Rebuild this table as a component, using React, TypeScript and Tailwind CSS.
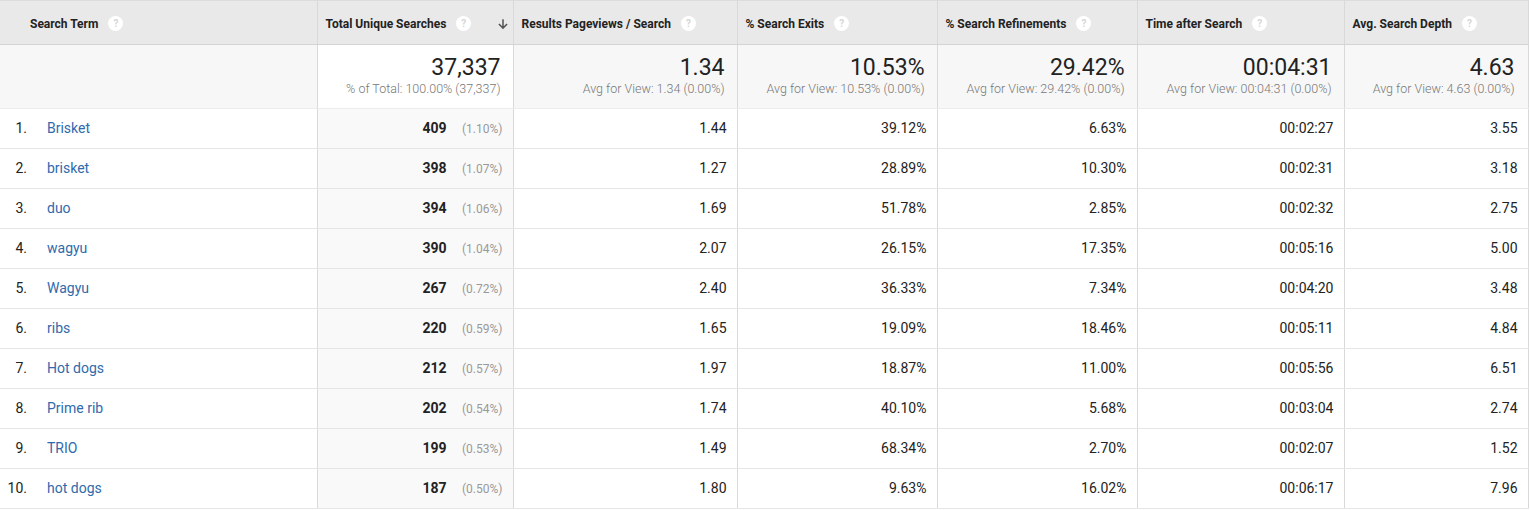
import React from "react";

type Row = {
  term: string;
  searches: string;
  pct: string;
  pv: string;
  exits: string;
  refine: string;
  time: string;
  depth: string;
};

const rows: Row[] = [
  { term: "Brisket", searches: "409", pct: "(1.10%)", pv: "1.44", exits: "39.12%", refine: "6.63%", time: "00:02:27", depth: "3.55" },
  { term: "brisket", searches: "398", pct: "(1.07%)", pv: "1.27", exits: "28.89%", refine: "10.30%", time: "00:02:31", depth: "3.18" },
  { term: "duo", searches: "394", pct: "(1.06%)", pv: "1.69", exits: "51.78%", refine: "2.85%", time: "00:02:32", depth: "2.75" },
  { term: "wagyu", searches: "390", pct: "(1.04%)", pv: "2.07", exits: "26.15%", refine: "17.35%", time: "00:05:16", depth: "5.00" },
  { term: "Wagyu", searches: "267", pct: "(0.72%)", pv: "2.40", exits: "36.33%", refine: "7.34%", time: "00:04:20", depth: "3.48" },
  { term: "ribs", searches: "220", pct: "(0.59%)", pv: "1.65", exits: "19.09%", refine: "18.46%", time: "00:05:11", depth: "4.84" },
  { term: "Hot dogs", searches: "212", pct: "(0.57%)", pv: "1.97", exits: "18.87%", refine: "11.00%", time: "00:05:56", depth: "6.51" },
  { term: "Prime rib", searches: "202", pct: "(0.54%)", pv: "1.74", exits: "40.10%", refine: "5.68%", time: "00:03:04", depth: "2.74" },
  { term: "TRIO", searches: "199", pct: "(0.53%)", pv: "1.49", exits: "68.34%", refine: "2.70%", time: "00:02:07", depth: "1.52" },
  { term: "hot dogs", searches: "187", pct: "(0.50%)", pv: "1.80", exits: "9.63%", refine: "16.02%", time: "00:06:17", depth: "7.96" },
];

const totals = [
  { value: "1.34", sub: "Avg for View: 1.34 (0.00%)" },
  { value: "10.53%", sub: "Avg for View: 10.53% (0.00%)" },
  { value: "29.42%", sub: "Avg for View: 29.42% (0.00%)" },
  { value: "00:04:31", sub: "Avg for View: 00:04:31 (0.00%)" },
  { value: "4.63", sub: "Avg for View: 4.63 (0.00%)" },
];

function Help() {
  return (
    <span className="ml-[10px] inline-flex h-[15px] w-[15px] items-center justify-center rounded-full bg-white text-[10px] font-bold leading-none text-[#d6d6d6]">
      ?
    </span>
  );
}

function HeadCell({ label, first, sorted }: { label: string; first?: boolean; sorted?: boolean }) {
  return (
    <th className={`h-[44px] border-b border-[#d4d4d4] p-0 pt-[2px] text-left align-middle ${first ? "" : "border-l border-l-[#d9d9d9]"}`}>
      <div className={`flex items-center ${first ? "pl-[30px]" : "pl-[8px]"} ${sorted ? "justify-between pr-[3px]" : ""}`}>
        <span className="flex items-center text-[12px] font-bold text-[#222]">
          {label}
          <Help />
        </span>
        {sorted && (
          <svg width="14" height="14" viewBox="0 0 24 24" className="text-[#555]">
            <path d="M12 4v15M5 12l7 7 7-7" stroke="currentColor" strokeWidth="2.6" fill="none" />
          </svg>
        )}
      </div>
    </th>
  );
}

export default function App() {
  return (
    <div className="w-[1530px] h-[510px] overflow-hidden bg-white font-['Roboto',sans-serif]">
      <table className="table-fixed border-collapse w-[1528px]">
        <colgroup>
          <col className="w-[317px]" />
          <col className="w-[196px]" />
          <col className="w-[224px]" />
          <col className="w-[200px]" />
          <col className="w-[200px]" />
          <col className="w-[207px]" />
          <col className="w-[184px]" />
        </colgroup>
        <thead>
          <tr className="bg-[#e9e9e9] border-t border-[#dcdcdc]">
            <HeadCell label="Search Term" first />
            <HeadCell label="Total Unique Searches" sorted />
            <HeadCell label="Results Pageviews / Search" />
            <HeadCell label="% Search Exits" />
            <HeadCell label="% Search Refinements" />
            <HeadCell label="Time after Search" />
            <th className="h-[44px] border-b border-[#d4d4d4] border-l border-l-[#d9d9d9] border-r border-r-[#d9d9d9] p-0 pt-[2px] text-left align-middle">
              <div className="flex items-center pl-[8px]">
                <span className="flex items-center text-[12px] font-bold text-[#222]">
                  Avg. Search Depth
                  <Help />
                </span>
              </div>
            </th>
          </tr>
        </thead>
        <tbody>
          <tr className="bg-[#f7f7f7] h-[64px]">
            <td className="border-b border-[#ececec] p-0" />
            <td className="border-b border-[#ececec] border-l border-l-[#d9d9d9] bg-white pr-[12px] pt-[10px] text-right align-top">
              <div className="text-[23px] leading-[26px] text-[#222]">37,337</div>
              <div className="text-[12.5px] leading-[16px] font-light text-[#777]">% of Total: 100.00% (37,337)</div>
            </td>
            {totals.map((t, i) => (
              <td
                key={t.value}
                className={`border-b border-[#ececec] border-l border-l-[#d9d9d9] pr-[12px] pt-[10px] text-right align-top ${i === totals.length - 1 ? "border-r border-r-[#d9d9d9] pr-[13px]" : ""}`}
              >
                <div className="text-[23px] leading-[26px] text-[#222]">{t.value}</div>
                <div className="text-[12.5px] leading-[16px] font-light text-[#777]">{t.sub}</div>
              </td>
            ))}
          </tr>
          {rows.map((r, i) => (
            <tr key={i} className="h-[40px] text-[14px] text-[#222]">
              <td className="border-b border-[#e6e6e6] p-0">
                <div className="flex items-center">
                  <span className="w-[27px] text-right">{i + 1}.</span>
                  <span className="ml-[20px] text-[#2f6aac]">{r.term}</span>
                </div>
              </td>
              <td className="border-b border-[#e6e6e6] border-l border-l-[#d9d9d9] bg-[#f9f9f9] pr-[10px] text-right">
                <span className="font-bold">{r.searches}</span>
                <span className="ml-[12px] inline-block w-[44px] text-[12px] text-[#999]">{r.pct}</span>
              </td>
              <td className="border-b border-[#e6e6e6] border-l border-l-[#d9d9d9] pr-[10px] text-right">{r.pv}</td>
              <td className="border-b border-[#e6e6e6] border-l border-l-[#d9d9d9] pr-[10px] text-right">{r.exits}</td>
              <td className="border-b border-[#e6e6e6] border-l border-l-[#d9d9d9] pr-[10px] text-right">{r.refine}</td>
              <td className="border-b border-[#e6e6e6] border-l border-l-[#d9d9d9] pr-[10px] text-right">{r.time}</td>
              <td className="border-b border-[#e6e6e6] border-l border-l-[#d9d9d9] border-r border-r-[#d9d9d9] pr-[10px] text-right">{r.depth}</td>
            </tr>
          ))}
        </tbody>
      </table>
    </div>
  );
}
